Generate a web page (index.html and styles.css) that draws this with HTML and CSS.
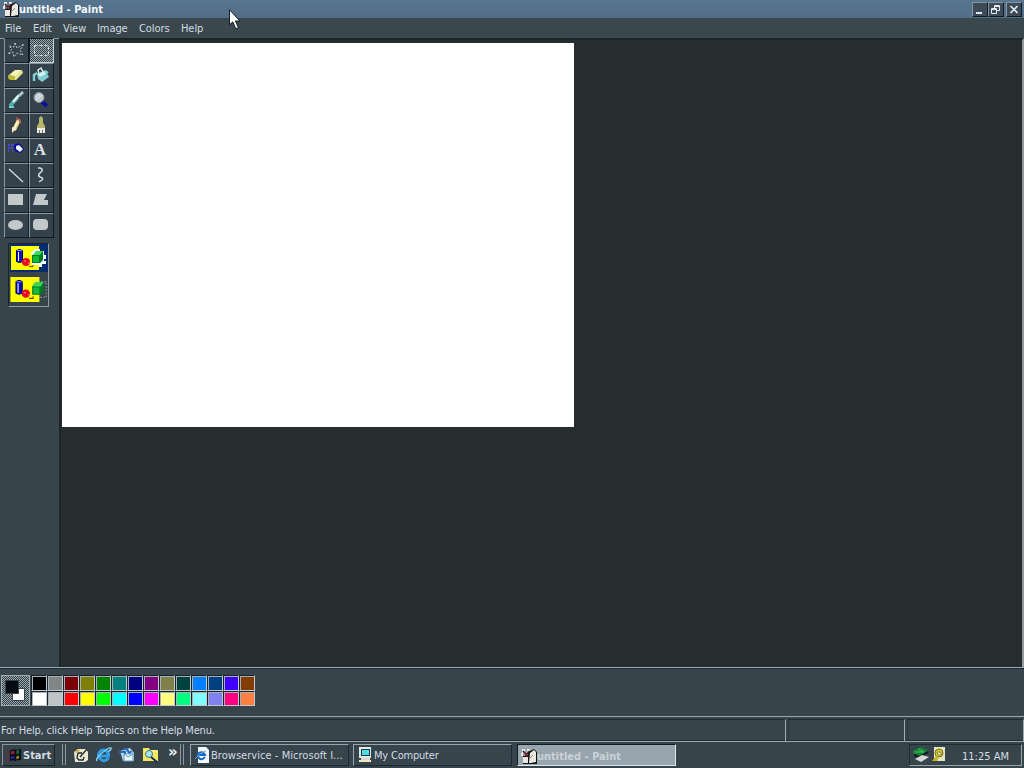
FILE: index.html
```
<!DOCTYPE html>
<html lang="en">
<head>
<meta charset="utf-8">
<title>untitled - Paint</title>
<link rel="stylesheet" href="styles.css">
</head>
<body>
<svg class="defs" width="0" height="0">
  <defs>
    <pattern id="dither" width="2" height="2" patternUnits="userSpaceOnUse"><path fill="#35424a" d="M0 0h2v2H0z"/><path fill="#9aa7af" d="M0 0h1v1H0zM1 1h1v1H1z"/></pattern>
    <symbol id="paint" viewBox="0 0 16 16"><path fill="#111" d="M2 8h5V4l6-3 3 3v12H2z"/><path fill="#e8e8df" d="M2 9h5v6H2zM9 5l4-3 2 2v10l-5 1H8zM1 1h3v4H1zM6 1h3v2H6zM0 5h2v3H0z"/><path d="M2 3l5 5M9 3L4 8" stroke="#221b20" stroke-width="1.500"/><path d="M3 5l3 2M5 8l2-2" stroke="#a5263a" stroke-width="1.500"/><path d="M8 11l4-4" stroke="#8c8c80"/></symbol>
    <symbol id="shapes" viewBox="0 0 36 24"><path fill="#ff0" d="M0 0h28v24H0z"/><path fill="#0713b8" stroke="#000070" d="M5.500 4.500q3-2 6 0v11q-3 2-6 0z"/><path stroke="#fff" d="M7.500 6v9"/><path d="M6 4.500h5" stroke="#8b91ff"/><circle cx="15" cy="16" r="4" fill="#e80b20"/><path d="M13 15h2m2 2h2" stroke="#ff8b9b"/><path d="M18 20.500h4v-2" stroke="#754200" fill="none"/><path fill="#007b22" d="M21 9l3-4h8v9l-3 3h-8z"/><path fill="#38db58" d="M21 9l3-4h8l-3 4z"/><path fill="#16b735" d="M22 10h6v6h-6z"/></symbol>
  </defs>
</svg>
<div class="desktop">
  <header class="titlebar"><svg class="appicon"><use href="#paint"/></svg><span class="title">untitled - Paint</span>
    <div class="controls">
      <span class="control"><svg viewBox="0 0 14 13"><path fill="#e2e9ed" d="M3 9h6v2H3z"/></svg></span>
      <span class="control restore"><svg viewBox="0 0 14 13"><path d="M5.500 5V2.500h5v5H8M5 3.500h6M2.500 5.500h5v5h-5zM2 6.500h6" fill="none" stroke="#e2e9ed"/></svg></span>
      <span class="control"><svg viewBox="0 0 14 13"><path d="M3.500 3l7 7m0-7l-7 7" fill="none" stroke="#e2e9ed" stroke-width="1.700"/></svg></span>
    </div>
    <svg class="pointer" viewBox="0 0 14 21"><path fill="#fff" stroke="#111c26" d="M1.500.8v15l3.300-3 3 7 2.600-1.200-3-6.600H12z"/></svg>
  </header>
  <nav class="menubar"><span class="m-file">File</span><span class="m-edit">Edit</span><span class="m-view">View</span><span class="m-image">Image</span><span class="m-colors">Colors</span><span>Help</span></nav>
  <main class="workspace">
    <aside class="toolbox">
      <div class="tools">
        <button class="tool"><svg viewBox="0 0 23 23"><path d="M10 4l2 5 7-4-4 6 3 5-6-2-3 4-1-5-5 2 4-5-3-3 5 1z" fill="none" stroke="#c5cdd1" stroke-dasharray="2 1.500"/></svg></button>
        <button class="tool selected"><svg viewBox="0 0 23 23"><path fill="url(#dither)" d="M0 0h24v24H0z"/><path d="M4.500 6.500h14v10h-14z" fill="none" stroke="#d5dfe3" stroke-dasharray="3 2"/></svg></button>
        <button class="tool"><svg viewBox="0 0 23 23"><path fill="#f7f5b8" d="M4 11l6-5h7l-6 6-1 1z"/><path fill="#bdb936" d="M3 11l7 1v4H5l-2-2z"/><path fill="#e9e892" d="M10 12l7-6 1 3-7 7h-1z"/></svg></button>
        <button class="tool"><svg viewBox="0 0 23 23"><path fill="#7dcbd0" d="M7 10l8-4 4 7-7 5-4-3z"/><path fill="#d2f2ed" d="M8 10l6-3 2 3-6 3z"/><path d="M9 11l-1-5 3-2 2 4" fill="none" stroke="#d5eced" stroke-width="1.500"/><path d="M4 17v-6l3-2M15 7l3 2" fill="none" stroke="#7acfd3" stroke-width="2.500"/></svg></button>
        <button class="tool"><svg viewBox="0 0 23 23"><path d="M5 17l8-9" stroke="#52aaa8" stroke-width="4"/><path d="M8 13l6-7" stroke="#e1f3f1" stroke-width="2.500"/><path d="M14 7l4-4" stroke="#aec7cf" stroke-width="3"/><path d="M4 18h5" stroke="#69d2c7" stroke-width="2"/></svg></button>
        <button class="tool"><svg viewBox="0 0 23 23"><path d="M12 13l5 4" stroke="#0c0e9a" stroke-width="4"/><circle cx="9" cy="8.500" r="5" fill="#c2cad0" stroke="#88939d"/><path d="M6 8l4-3M6 11l6-5" stroke="#e8edf1"/></svg></button>
        <button class="tool"><svg viewBox="0 0 23 23"><path d="M9 16l5-10" stroke="#dec87d" stroke-width="4"/><path d="M9 15l4-8" stroke="#fff9d3" stroke-width="2"/><path d="M11 4l4 2v4" fill="none" stroke="#bc5752" stroke-width="1.500"/><path fill="#f5eed5" d="M7 13l4 2-4 4z"/></svg></button>
        <button class="tool"><svg viewBox="0 0 23 23"><path fill="#b5b66b" d="M9 4l2-2 2 2v5l2 3v2H7v-2l2-3z"/><path fill="#efeedf" d="M7 14h8v5H7z"/><path d="M9.500 16v3m3-3v3" stroke="#6e7475"/></svg></button>
        <button class="tool"><svg viewBox="0 0 23 23"><path fill="#0909a0" d="M9 6l5-2 5 6-4 4-5-2z"/><path fill="#f2f4fb" d="M11 7l3-1 4 4-3 3-4-3z"/><path d="M3 6h2m1 0h3M3 9h2m1 0h2M3 12h1m3 0h1" stroke="#4747dc" stroke-width="2"/></svg></button>
        <button class="tool letter">A</button>
        <button class="tool"><svg viewBox="0 0 23 23"><path d="M4 5l14 13" stroke="#d2d9df" stroke-width="1.400"/></svg></button>
        <button class="tool"><svg viewBox="0 0 23 23"><path d="M8 4h2q3 1 2 3l-3 3q-1 2 1 3 4 1 2 3l-3 2" fill="none" stroke="#d4dade" stroke-width="1.500"/></svg></button>
        <button class="tool"><svg viewBox="0 0 23 23"><path fill="#c3c8cb" d="M3 5h15v11H3z"/></svg></button>
        <button class="tool"><svg viewBox="0 0 23 23"><path fill="#c3c8cb" d="M6 5h11l-3 6h4v5H3z"/></svg></button>
        <button class="tool"><svg viewBox="0 0 23 23"><ellipse cx="10.500" cy="11" rx="7.500" ry="5" fill="#c3c8cb"/></svg></button>
        <button class="tool"><svg viewBox="0 0 23 23"><rect x="3" y="5" width="15" height="11" rx="4" fill="#c3c8cb"/></svg></button>
      </div>
      <div class="options">
        <svg class="option opaque" viewBox="0 0 36 24"><path fill="#f4ffff" d="M25 3h4v2h4v4h2v3h-2v3h2v3h-4v3h-6z"/><use href="#shapes"/><path fill="#effff5" d="M20 7l4-4h5v2h-4l-3 4h-2zM21 17h9v2h-9zM33 9h2v4h-2z"/></svg>
        <svg class="option" viewBox="0 0 36 24"><use href="#shapes"/><path d="M24 4.500h10.500v15H24" fill="none" stroke="#d3d9dc" stroke-dasharray="1 2"/></svg>
      </div>
    </aside>
    <section class="canvas-area"><div class="canvas"></div></section>
  </main>
  <section class="palette">
    <svg class="current" viewBox="0 0 27 29"><path fill="url(#dither)" d="M0 0h30v32H0z"/><path fill="#fff" stroke="#35424a" d="M10.500 12.500h12v12h-12z"/><path fill="#050b0f" stroke="#35424a" d="M3.500 4.500h13v13h-13z"/></svg>
    <div class="swatches"><i class="c1"></i><i class="c2"></i><i class="c3"></i><i class="c4"></i><i class="c5"></i><i class="c6"></i><i class="c7"></i><i class="c8"></i><i class="c9"></i><i class="c10"></i><i class="c11"></i><i class="c12"></i><i class="c13"></i><i class="c14"></i><i class="c15"></i><i class="c16"></i><i class="c17"></i><i class="c18"></i><i class="c19"></i><i class="c20"></i><i class="c21"></i><i class="c22"></i><i class="c23"></i><i class="c24"></i><i class="c25"></i><i class="c26"></i><i class="c27"></i><i class="c28"></i></div>
  </section>
  <footer class="statusbar"><div class="help">For Help, click Help Topics on the Help Menu.</div><div></div><div></div></footer>
  <div class="taskbar">
    <button class="start"><svg viewBox="0 0 18 16"><path d="M1 4h3m0 3H1m3 3H1m3 3H1" stroke="#8b202b" stroke-width="1.500" stroke-dasharray="2 1"/><path fill="#090c17" d="M5 3q4-3 7-1l5-1v12q-4-1-6 1-3-2-6 0z"/><path fill="#951e2d" d="M6 4q3-2 4 0v3q-2-1-4 0z"/><path fill="#126b32" d="M12 3l3-1v4l-3 1z"/><path fill="#2024a2" d="M6 9q2-1 4 0v3q-2-1-4 0z"/><path fill="#a18c22" d="M12 9l3-1v3l-3 1z"/></svg><span>Start</span></button>
    <i class="divider first"></i>
    <div class="quick">
      <svg viewBox="0 0 18 18"><path fill="#e9e9ce" d="M2 6l4-3h8l2 3v8l-3 2H3z"/><path d="M10 7H6l-1 5 2 2h4l1-3M8 11l7-8" fill="none" stroke="#25292b" stroke-width="1.300"/><path fill="#d1b952" d="M2 6l4-3 2 2-3 2z"/></svg>
      <svg viewBox="0 0 18 18"><path d="M13.500 12q-4 5-8 1t0-8q5-3 8 3v2H5" fill="none" stroke="#309ce3" stroke-width="3"/><path d="M2 15Q0 13 7 7t9-5q1 1-3 4" fill="none" stroke="#80ccef" stroke-width="1.500"/></svg>
      <svg viewBox="0 0 18 18"><path fill="#b4d7ec" d="M2 5l10-3 4 5v8H5z"/><path d="M1 6h6v4M5 4q3-3 5 1t3 0" stroke="#286ab9" fill="none" stroke-width="2"/><path fill="#eef8fb" stroke="#589bc6" d="M6 8h9v7H6z"/><path d="M6 8l4 3 5-3" fill="none" stroke="#589bc6"/></svg>
      <svg viewBox="0 0 18 18"><path fill="#f5e75b" d="M2 2h6l1 2h8v11H2z"/><path stroke="#fff9b0" d="M3 5h13"/><circle cx="8" cy="8" r="3.500" fill="#a8e5ed" stroke="#37788c"/><path d="M10 11l6 5" stroke="#1b2d58" stroke-width="2"/></svg>
    </div>
    <span class="more">»</span><i class="divider second"></i>
    <div class="tasks">
      <button class="task"><svg viewBox="0 0 16 16"><path fill="#f3f6fa" d="M3 0h8l3 3v13H3z"/><path d="M10 10q-3 4-6 1t0-5q4-2 6 2H3" fill="none" stroke="#1769bd" stroke-width="2"/><path d="M0 12q5-7 11-8" fill="none" stroke="#5ba5df"/></svg><span>Browservice - Microsoft I...</span></button>
      <button class="task computer"><svg viewBox="0 0 16 16"><path fill="#e4e8e2" d="M1 0h12v11H1z"/><path fill="#123a51" d="M3 2h9v7H3z"/><path fill="#51dce3" d="M4 3h7v5H4z"/><path fill="#d8d8c8" d="M3 11h9v2H3z"/><path fill="#f0e5c3" d="M1 13h12v2H1z"/></svg><span>My Computer</span></button>
      <button class="task active"><svg><use href="#paint"/></svg><span>untitled - Paint</span></button>
    </div>
    <div class="tray"><svg viewBox="0 0 18 16"><path fill="#158334" d="M1 4l8-4 6 3v2L7 9 1 6z"/><path d="M3 5h9M6 2l6 3" stroke="#45c358"/><path d="M2 8l5 2 9-5" stroke="#10191d" stroke-width="2" fill="none"/><path fill="#d3d8d7" d="M3 12l7-4 7 2-8 5z"/></svg><svg class="audio" viewBox="0 0 14 16"><path fill="#e4e5c4" d="M2 0h11v14H2z"/><circle cx="7" cy="6" r="4" fill="#d5cb31" stroke="#77711d"/><path d="M4 9l-4 5h5l2-4" fill="#c5b622"/><path d="M5 5h4v3H6z" fill="#ece8a8" stroke="#6a6725" stroke-width=".7"/></svg><time>11:25 AM</time></div>
  </div>
</div>
</body>
</html>
```

FILE: styles.css
```
*{box-sizing:border-box}
body{margin:0;overflow:hidden;background:#37444c;color:#d3dde2;font:11px "DejaVu Sans Condensed","DejaVu Sans",sans-serif}
button{font:inherit;color:inherit;padding:0;margin:0;border-radius:0}
svg{display:block;flex:none}
.defs{position:absolute}
.desktop{width:1024px;height:768px;display:flex;flex-direction:column}
.titlebar{height:18px;display:flex;align-items:center;background:linear-gradient(#587590,#526d86);position:relative;padding-left:3px;flex:none}
.appicon{width:16px;height:16px}
.title{font-weight:bold;color:#f4f8fc;line-height:18px;padding-top:1px;white-space:nowrap}
.controls{margin-left:auto;display:flex;padding-right:2px}
.control{width:16px;height:15px;border:1px solid;border-color:#8495a2 #111b23 #111b23 #8495a2;background:#3c4b57}
.control:last-child{margin-left:2px}
.control svg{width:14px;height:13px}
.pointer{position:absolute;left:228px;top:9px;width:14px;height:21px;z-index:1}
.menubar{height:20px;flex:none;display:flex;padding-left:5px;line-height:21px;background:#3a474d;white-space:nowrap;letter-spacing:-.08px}
.m-file{width:28px}.m-edit{width:30px}.m-view{width:34px}.m-image{width:42px}.m-colors{width:42px}
.workspace{height:629px;display:flex;flex:none}
.toolbox{width:59px;padding-left:4px;border-top:1px solid #8c989f}
.tools{display:grid;grid-template-columns:25px 25px;grid-auto-rows:25px;border-bottom:1px solid #17212a;width:51px;height:200px;margin-top:-1px}
.tool{background:#35414b;border:1px solid;border-color:#8b979f #111b24 #111b24 #8b979f;overflow:hidden;width:25px;height:25px}
.tool:nth-child(-n+2){border-top-color:#1b252b}
.tool svg{width:23px;height:23px}
.tool.selected{border-color:#101a21 #c5ced3 #c5ced3 #101a21}
.letter{font:bold 17px/20px "Liberation Serif",serif;color:#dde1e3;padding:0 3px 2px 0}
.options{width:41px;height:64px;margin:5px 0 0 4px;border:1px solid;border-color:#17222b #909ba2 #909ba2 #17222b}
.option{width:38px;height:25px;margin:5px 0 0 1px}
.option.opaque{height:28px;padding:2px 0;background:#062b70;margin:0 0 0 1px}
.canvas-area{width:965px;background:#272d2f;border-left:2px solid #1c252b;border-top:2px solid #1c252b;border-right:2px solid #909a9f;padding:3px 0 0 1px}
.canvas{width:512px;height:384px;background:#fff}
.palette{height:49px;flex:none;background:#37444c;border-top:1px solid #9ba8b0;box-shadow:inset 0 1px #202c35;display:flex;padding:7px 0 0 1px}
.current{width:29px;height:31px;border:1px solid #a2acb3}
.swatches{display:grid;grid-template-columns:repeat(14,16px);grid-template-rows:16px 15px;margin-left:1px}
.swatches i{border:1px solid;border-color:#17232b #c2cbd0 #c2cbd0 #17232b;box-shadow:inset 1px 1px #a7b0b6}
.c1{background:#000}.c2{background:#808585}.c3{background:#7c0008}.c4{background:#808000}.c5{background:#008300}.c6{background:#008080}.c7{background:#000080}.c8{background:#830083}.c9{background:#80804b}.c10{background:#004240}.c11{background:#0080ff}.c12{background:#003f80}.c13{background:#4000ff}.c14{background:#843d00}
.c15{background:#fff}.c16{background:#bfc4c6}.c17{background:#f00}.c18{background:#ff0}.c19{background:#0f0}.c20{background:#0ff}.c21{background:#00f}.c22{background:#f0f}.c23{background:#ffff80}.c24{background:#00ff80}.c25{background:#80ffff}.c26{background:#8080f0}.c27{background:#ff0080}.c28{background:#ff8040}
.statusbar{height:25px;flex:none;display:grid;grid-template-columns:786px 119px 1fr;border-top:1px solid #98a6ae;border-bottom:1px solid #1c2931;padding-top:2px}
.statusbar div{border-top:1px solid #202c34;border-right:1px solid #a0acb4;border-bottom:1px solid #99a6ae;padding-left:1px;line-height:22px;white-space:nowrap;letter-spacing:-.19px}
.statusbar div+div{border-left:1px solid #2d3a42;margin-left:2px}
.taskbar{height:27px;flex:none;display:flex;align-items:flex-start;padding:2px;border-top:1px solid #9ba8b0;background:#37444c}
.start{width:53px;height:22px;display:flex;align-items:center;border:1px solid;border-color:#85949d #17232b #17232b #85949d;background:#37444c;font-weight:bold;padding-left:2px;gap:1px}
.start svg{width:17px;height:15px}
.divider{width:4px;height:21px;border:solid #8b989f;border-width:0 1px}
.first{margin-left:7px}
.quick{display:flex;gap:5px;margin:2px 0 0 6px}.quick svg{width:18px;height:18px}
.more{font:bold 15px/17px "DejaVu Sans",sans-serif;color:#eef2f5;margin-left:9px;width:12px}
.second{margin-left:0}
.tasks{display:flex;gap:4px;margin-left:6px}
.task{width:159px;height:22px;padding-left:4px;display:flex;align-items:center;text-align:left;border:1px solid;border-color:#98a5ae #1c2932 #1c2932 #98a5ae;background:#37444c;white-space:nowrap}
.task:first-child{letter-spacing:.04px}
.computer{letter-spacing:-.2px}
.task svg{width:16px;height:16px}
.task.active{background:#99a5ae;color:#c8d2d8;border-color:#111b23 #e0e7eb #e0e7eb #111b23;font-weight:bold;padding:2px 0 0 3px;margin-left:1px}
.tray{margin-left:auto;width:113px;height:22px;display:flex;align-items:center;border:1px solid;border-color:#202d35 #98a5ad #98a5ad #202d35;padding-left:2px}
.tray svg{width:18px;height:16px}.tray .audio{width:14px;margin-left:2px}
time{margin:2px 0 0 auto;padding-right:12px}
```
